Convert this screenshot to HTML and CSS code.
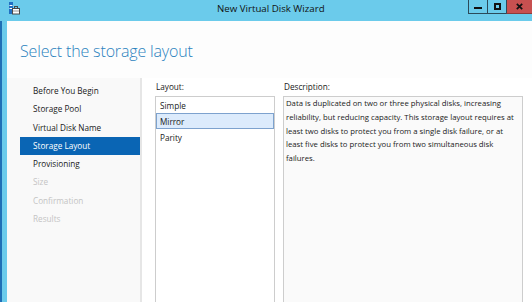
FILE: index.html
```html
<!DOCTYPE html>
<html>
<head>
<meta charset="utf-8">
<link rel="stylesheet" href="styles.css">
</head>
<body>
<div class="window">
  <div class="titlebar">
    <svg class="app-icon" width="11" height="13" viewBox="0 0 11 13">
      <rect x="0" y="0" width="4" height="12" fill="#1f6fc2"/>
      <rect x="0.5" y="3" width="3" height="1" fill="#ffffff"/>
      <rect x="0.5" y="6" width="3" height="1" fill="#ffffff"/>
      <rect x="5.5" y="4.5" width="3" height="2" fill="none" stroke="#4a4a4a"/>
      <rect x="3.5" y="6.5" width="7" height="5.5" fill="#ffffff" stroke="#4a4a4a"/>
      <rect x="4" y="8.5" width="6" height="1" fill="#9a9a9a"/>
    </svg>
    <div class="title">New Virtual Disk Wizard</div>
    <div class="controls">
      <div class="btn btn-min"><span class="glyph-min"></span></div>
      <div class="btn btn-max"><span class="glyph-max"></span></div>
      <div class="btn btn-close">
        <svg width="7" height="7" viewBox="0 0 7 7"><path d="M0.8 0.8L6.2 6.2M6.2 0.8L0.8 6.2" stroke="#111" stroke-width="1.7"/></svg>
      </div>
    </div>
  </div>
  <div class="frame">
    <div class="content">
      <div class="header">
        <h1 class="heading">Select the storage layout</h1>
      </div>
      <div class="body">
        <nav class="steps">
          <div class="step">Before You Begin</div>
          <div class="step">Storage Pool</div>
          <div class="step">Virtual Disk Name</div>
          <div class="step step-current">Storage Layout</div>
          <div class="step">Provisioning</div>
          <div class="step step-disabled">Size</div>
          <div class="step step-disabled">Confirmation</div>
          <div class="step step-disabled">Results</div>
        </nav>
        <div class="divider"></div>
        <div class="main">
          <div class="col col-layout">
            <div class="label">Layout:</div>
            <ul class="listbox">
              <li class="option">Simple</li>
              <li class="option option-selected">Mirror</li>
              <li class="option">Parity</li>
            </ul>
          </div>
          <div class="col col-desc">
            <div class="label">Description:</div>
            <div class="descbox">Data is duplicated on two or three physical disks, increasing<br>reliability, but reducing capacity. This storage layout requires at<br>least two disks to protect you from a single disk failure, or at<br>least five disks to protect you from two simultaneous disk<br>failures.</div>
          </div>
        </div>
      </div>
    </div>
  </div>
</div>
</body>
</html>
```
FILE: styles.css
```css
html, body {
  margin: 0;
  padding: 0;
}
body {
  width: 532px;
  height: 302px;
  overflow: hidden;
  background: #6bcbeb;
  font-family: "Open Sans", "Noto Sans", sans-serif;
}
.window {
  display: flex;
  flex-direction: column;
  height: 314px;
}
.titlebar {
  flex: none;
  height: 21px;
  display: flex;
  align-items: flex-start;
  background: #6bcbeb;
}
.app-icon {
  flex: none;
  margin: 2px 0 0 9px;
}
.title {
  flex: 1;
  padding-left: 197px;
  font-size: 9.7px;
  line-height: 18px;
  color: #111111;
  white-space: nowrap;
}
.controls {
  flex: none;
  display: flex;
}
.btn {
  height: 13px;
  display: flex;
  align-items: center;
  justify-content: center;
  border-left: 1px solid #2b4a5a;
  border-bottom: 1px solid #2b4a5a;
}
.btn-min, .btn-max {
  width: 18px;
}
.btn-close {
  width: 25px;
  background: #c75050;
  border-bottom-color: #8e3a3a;
}
.glyph-min {
  width: 8px;
  height: 2px;
  margin-top: 2px;
  background: #111;
}
.glyph-max {
  width: 3px;
  height: 3px;
  border: 2px solid #111;
}
.frame {
  flex: 1;
  display: flex;
  border-left: 2px solid #1f6fb6;
  padding-left: 5px;
}
.content {
  flex: 1;
  display: flex;
  flex-direction: column;
  background: #fdfdfd;
}
.header {
  flex: none;
  height: 57px;
  box-sizing: border-box;
  padding: 20px 0 0 13px;
}
.heading {
  margin: 0;
  font-size: 16px;
  font-weight: 300;
  line-height: 20px;
  letter-spacing: -0.15px;
  color: #2b82bd;
  white-space: nowrap;
}
.body {
  flex: 1;
  display: flex;
}
.steps {
  flex: none;
  width: 133px;
  padding-top: 4px;
  background: #f9f9f9;
}
.step {
  height: 18.25px;
  line-height: 18.25px;
  margin-left: 13px;
  padding-left: 13px;
  font-size: 8.2px;
  color: #1a1a1a;
  white-space: nowrap;
}
.step-current {
  background: #0a65b4;
  color: #ffffff;
}
.step-disabled {
  color: #c4c4c4;
}
.divider {
  flex: none;
  width: 2px;
  background: #e6e6e6;
}
.main {
  flex: 1;
  display: flex;
  padding-left: 13px;
  background: #ffffff;
}
.col {
  display: flex;
  flex-direction: column;
}
.col-layout {
  width: 120px;
}
.col-desc {
  width: 240px;
  margin-left: 8px;
}
.label {
  margin-top: 3px;
  margin-bottom: 3px;
  padding-left: 1px;
  font-size: 8.2px;
  line-height: 12px;
  color: #1a1a1a;
  white-space: nowrap;
}
.listbox {
  flex: 1;
  margin: 0;
  padding: 0;
  list-style: none;
  border: 1px solid #cdcdcd;
  background: #ffffff;
}
.option {
  box-sizing: border-box;
  height: 16px;
  padding-top: 1px;
  line-height: 16px;
  padding-left: 4px;
  font-size: 8.2px;
  color: #1a1a1a;
}
.option-selected {
  line-height: 14px;
  padding-left: 3px;
  background: #dcebfc;
  border: 1px solid #7da2ce;
}
.descbox {
  flex: 1;
  border: 1px solid #cdcdcd;
  background: #fafafa;
  padding: 0 2px;
  font-size: 7.75px;
  line-height: 13.75px;
  color: #1a1a1a;
  white-space: nowrap;
}
```
